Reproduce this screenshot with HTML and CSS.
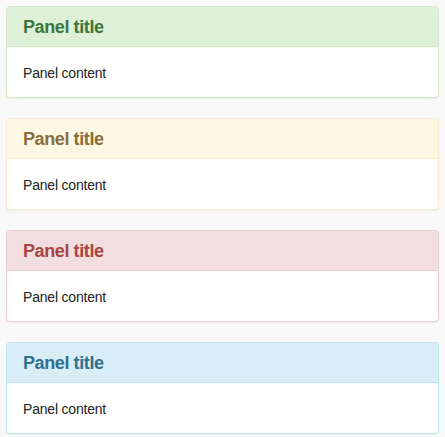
FILE: index.html
```html
<!DOCTYPE html>
<html>
<head>
<meta charset="utf-8">
<link rel="stylesheet" href="styles.css">
</head>
<body>
  <div class="panel panel-success">
    <div class="panel-heading"><h3 class="panel-title">Panel title</h3></div>
    <div class="panel-body">Panel content</div>
  </div>
  <div class="panel panel-warning">
    <div class="panel-heading"><h3 class="panel-title">Panel title</h3></div>
    <div class="panel-body">Panel content</div>
  </div>
  <div class="panel panel-danger">
    <div class="panel-heading"><h3 class="panel-title">Panel title</h3></div>
    <div class="panel-body">Panel content</div>
  </div>
  <div class="panel panel-info">
    <div class="panel-heading"><h3 class="panel-title">Panel title</h3></div>
    <div class="panel-body">Panel content</div>
  </div>
</body>
</html>
```
FILE: styles.css
```css
html, body {
  background: #f8f8f8;
}
body {
  margin: 0;
  padding: 6px;
  font-family: "Liberation Sans", Arial, sans-serif;
  font-size: 14px;
  line-height: 20px;
  color: #333;
}
.panel {
  background: #fff;
  border: 1px solid transparent;
  border-radius: 4px;
  margin-bottom: 20px;
  box-shadow: 0 1px 1px rgba(0,0,0,0.05);
}
.panel:last-child {
  margin-bottom: 0;
}
.panel-heading {
  padding: 11px 15px 9px 16px;
  border-bottom: 1px solid transparent;
  border-top-left-radius: 3px;
  border-top-right-radius: 3px;
}
.panel-title {
  margin: 0;
  font-size: 18px;
  line-height: 19px;
  font-weight: bold;
  color: inherit;
  letter-spacing: -0.4px;
}
.panel-body {
  padding: 16px 15px 14px 16px;
  font-size: 14px;
  line-height: 20px;
  letter-spacing: -0.2px;
  color: #222;
}
.panel-success { border-color: #d6e9c6; }
.panel-success .panel-heading { background: #dff0d8; border-color: #d6e9c6; color: #3c763d; }
.panel-warning { border-color: #faebcc; }
.panel-warning .panel-heading { background: #fcf8e3; border-color: #faebcc; color: #8a6d3b; }
.panel-danger { border-color: #ebccd1; }
.panel-danger .panel-heading { background: #f2dede; border-color: #ebccd1; color: #a94442; }
.panel-info { border-color: #bce8f1; }
.panel-info .panel-heading { background: #d9edf7; border-color: #bce8f1; color: #31708f; }
```
